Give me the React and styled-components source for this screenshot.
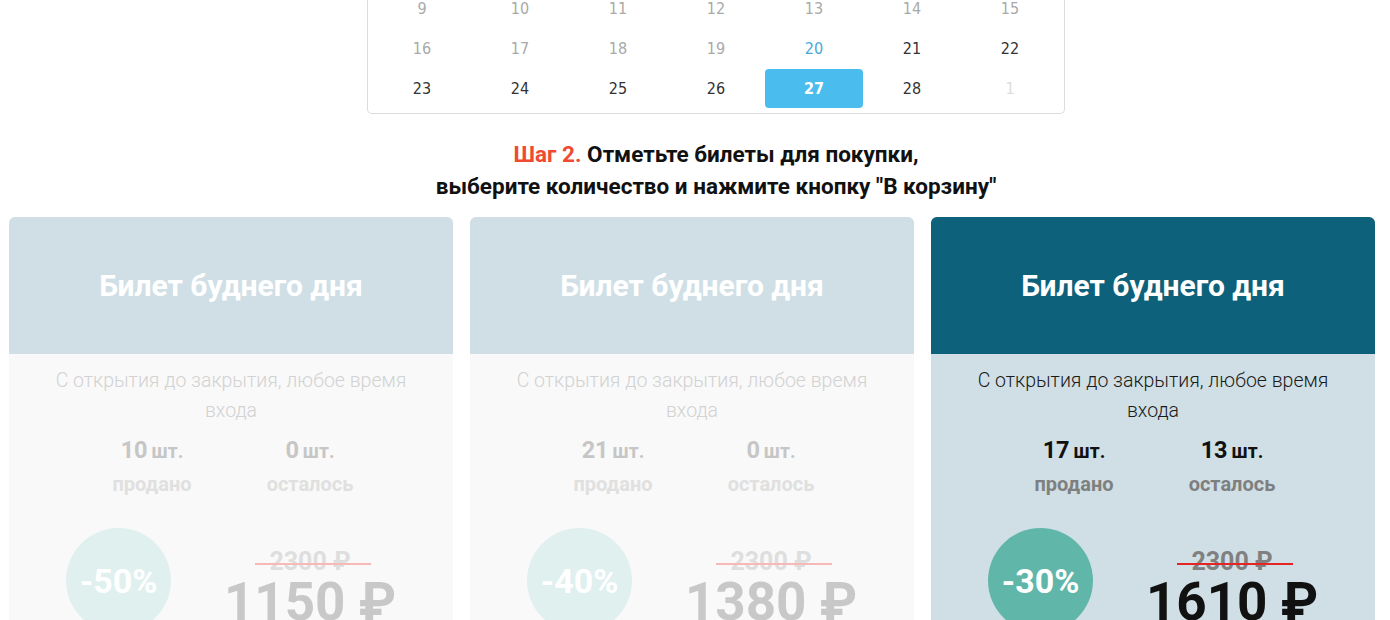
import React from 'react';
import styled, { createGlobalStyle } from 'styled-components';

const GlobalStyle = createGlobalStyle`
  body {
    margin: 0;
    background: #ffffff;
    font-family: Roboto, "Noto Sans", sans-serif;
  }
`;

const Page = styled.div`
  width: 1390px;
  height: 620px;
  overflow: hidden;
`;

const Scroller = styled.div`
  margin-top: -12px;
`;

const TopSection = styled.section`
  width: 698px;
  margin-left: 367px;
`;

const Calendar = styled.div`
  box-sizing: border-box;
  border: 1px solid #dcdcdc;
  border-top: none;
  border-radius: 0 0 5px 5px;
  padding: 0 5px 5px;
  display: grid;
  grid-template-columns: repeat(7, 1fr);
  grid-auto-rows: 40px;
  font-family: "DejaVu Sans Condensed", "DejaVu Sans", sans-serif;
  font-stretch: condensed;
  font-size: 16px;
`;

const dayColors = {
  past: '#a9a9a9',
  today: '#4aa9db',
  future: '#333333',
  other: '#dddddd',
  selected: '#ffffff',
};

const Day = styled.div`
  display: flex;
  align-items: center;
  justify-content: center;
  border-radius: 4px;
  margin: ${p => (p.$kind === 'selected' ? '1px 0 0' : '0')};
  color: ${p => dayColors[p.$kind]};
  background: ${p => (p.$kind === 'selected' ? '#4abdee' : 'transparent')};
  font-weight: ${p => (p.$kind === 'selected' ? 'bold' : 'normal')};
`;

const StepTitle = styled.h2`
  margin: 24px 0 0;
  text-align: center;
  font-size: 22.5px;
  line-height: 32px;
  font-weight: 700;
  color: #111111;
`;

const StepNo = styled.span`
  color: #ef4b32;
`;

const Cards = styled.div`
  display: grid;
  grid-template-columns: 444px 444px 444px;
  gap: 17px;
  padding-left: 9px;
  margin-top: 15px;
`;

const Card = styled.article`
  border-radius: 6px 6px 0 0;
  overflow: hidden;
  background: ${p => (p.$active ? '#cfdfe5' : '#f9f9f9')};
  height: 420px;
`;

const CardHead = styled.header`
  height: 137px;
  display: flex;
  align-items: center;
  justify-content: center;
  background: ${p => (p.$active ? '#0d617a' : '#cfdfe5')};
  color: #ffffff;
  font-size: 30px;
  font-weight: 700;
`;

const Desc = styled.p`
  margin: 12px 0 0;
  padding: 0 40px;
  text-align: center;
  font-size: 19.5px;
  line-height: 30px;
  font-weight: 300;
  color: ${p => (p.$active ? '#1a1a1a' : '#d2d2d2')};
`;

const Stats = styled.div`
  display: flex;
  justify-content: center;
  gap: 38px;
  margin-top: 8px;
`;

const Stat = styled.div`
  width: 120px;
  text-align: center;
  font-weight: 700;
`;

const Amount = styled.div`
  font-size: 23.5px;
  line-height: 32px;
  color: ${p => (p.$active ? '#111111' : '#c6c6c6')};
`;

const Unit = styled.span`
  font-size: 19.5px;
  margin-left: 4px;
`;

const StatLabel = styled.div`
  font-size: 20px;
  line-height: 32px;
  color: ${p => (p.$active ? '#7f7f7f' : '#e0e0e0')};
`;

const PriceRow = styled.div`
  display: flex;
  align-items: flex-start;
  padding-left: 57px;
  margin-top: 28px;
`;

const Discount = styled.div`
  flex: none;
  width: 105px;
  height: 105px;
  border-radius: 50%;
  display: flex;
  align-items: center;
  justify-content: center;
  background: ${p => (p.$active ? '#60b6a9' : '#dff0ef')};
  color: #ffffff;
  font-size: 34px;
  font-weight: 700;
`;

const Prices = styled.div`
  flex: 1;
  display: flex;
  flex-direction: column;
  align-items: center;
  padding-right: 4px;
`;

const OldPrice = styled.div`
  position: relative;
  margin-top: 21px;
  font-size: 25px;
  line-height: 26px;
  font-weight: 700;
  color: ${p => (p.$active ? '#808080' : '#dedede')};

  &::after {
    content: '';
    position: absolute;
    left: -14px;
    right: -20px;
    top: 14px;
    height: 2px;
    background: ${p => (p.$active ? '#e52424' : '#f5b9b9')};
  }
`;

const NewPrice = styled.div`
  font-size: 53px;
  line-height: 54px;
  font-weight: 700;
  color: ${p => (p.$active ? '#111111' : '#c8c8c8')};
`;

const rows = [
  [9, 10, 11, 12, 13, 14, 15].map(d => [d, 'past']),
  [16, 17, 18, 19].map(d => [d, 'past']).concat([[20, 'today'], [21, 'future'], [22, 'future']]),
  [23, 24, 25, 26].map(d => [d, 'future']).concat([[27, 'selected'], [28, 'future'], [1, 'other']]),
];

const tickets = [
  { sold: 10, left: 0, discount: 50, price: 1150, active: false },
  { sold: 21, left: 0, discount: 40, price: 1380, active: false },
  { sold: 17, left: 13, discount: 30, price: 1610, active: true },
];

function Ticket({ t }) {
  const a = t.active;
  return (
    <Card $active={a}>
      <CardHead $active={a}>Билет буднего дня</CardHead>
      <Desc $active={a}>С открытия до закрытия, любое время входа</Desc>
      <Stats>
        <Stat>
          <Amount $active={a}>{t.sold}<Unit>шт.</Unit></Amount>
          <StatLabel $active={a}>продано</StatLabel>
        </Stat>
        <Stat>
          <Amount $active={a}>{t.left}<Unit>шт.</Unit></Amount>
          <StatLabel $active={a}>осталось</StatLabel>
        </Stat>
      </Stats>
      <PriceRow>
        <Discount $active={a}>-{t.discount}%</Discount>
        <Prices>
          <OldPrice $active={a}>2300 ₽</OldPrice>
          <NewPrice $active={a}>{t.price} ₽</NewPrice>
        </Prices>
      </PriceRow>
    </Card>
  );
}

export default function App() {
  return (
    <Page>
      <GlobalStyle />
      <Scroller>
        <TopSection>
          <Calendar>
            {rows.flat().map(([d, kind], i) => (
              <Day key={i} $kind={kind}>{d}</Day>
            ))}
          </Calendar>
          <StepTitle>
            <StepNo>Шаг 2.</StepNo> Отметьте билеты для покупки,
            <br />
            выберите количество и нажмите кнопку "В корзину"
          </StepTitle>
        </TopSection>
        <Cards>
          {tickets.map((t, i) => <Ticket key={i} t={t} />)}
        </Cards>
      </Scroller>
    </Page>
  );
}
